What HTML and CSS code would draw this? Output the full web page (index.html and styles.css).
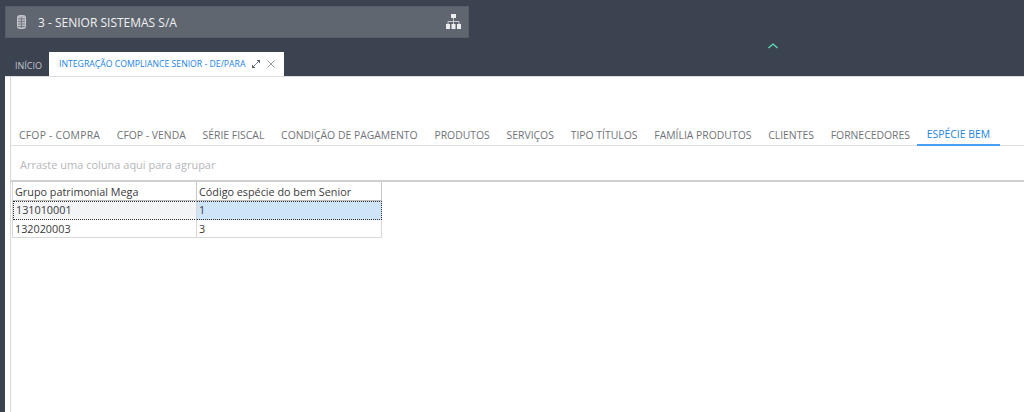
FILE: index.html
```html
<!DOCTYPE html>
<html lang="pt">
<head>
<meta charset="utf-8">
<title>Integração Compliance Senior</title>
<link rel="stylesheet" href="styles.css">
</head>
<body>
<header class="top">
  <div class="company">
    <svg class="ico-doc" width="9" height="14" viewBox="0 0 9 14"><rect x="0.500" y="0.500" width="8" height="13" rx="2" fill="#b4b7bb" stroke="#c4c7cb"/><path d="M1 4h7M1 6.500h7M1 9h7M1 11.500h7M4.500 2v11" stroke="#6d737c" stroke-width="0.800"/></svg>
    <span class="company-name">3 - SENIOR SISTEMAS S/A</span>
    <svg class="ico-tree" width="15" height="15" viewBox="0 0 15 15"><path d="M5 0h5v4H5zM0 10h4v5H0zM5.500 10h4v5h-4zM11 10h4v5h-4z" fill="#eceded"/><path d="M7.500 4v3M2 10V7.500h11V10M7.500 7v3" stroke="#c8cacd" fill="none"/></svg>
  </div>
  <div class="collapse-row">
    <svg width="10" height="6" viewBox="0 0 10 6"><path d="M0.500 5L5 1l4.500 4" fill="none" stroke="#5fe0bb" stroke-width="1.300"/></svg>
  </div>
  <nav class="doc-tabs">
    <span class="doc-tab">INÍCIO</span>
    <span class="doc-tab doc-tab-active">
      <span>INTEGRAÇÃO COMPLIANCE SENIOR - DE/PARA</span>
      <svg class="ico-expand" width="8" height="8" viewBox="0 0 8 8"><path d="M0 8V5l3 3zM8 0v3L5 0zM1.500 6.500l5-5" fill="#56606a" stroke="#56606a" stroke-width="0.800"/></svg>
      <svg class="ico-close" width="8" height="8" viewBox="0 0 8 8"><path d="M0.500 0.500l7 7M7.500 0.500l-7 7" stroke="#9a9a9a" stroke-width="1"/></svg>
    </span>
  </nav>
</header>
<main class="panel">
  <div class="inner">
    <nav class="sub-tabs">
      <span class="sub-tab sub-tab-first">CFOP - COMPRA</span>
      <span class="sub-tab">CFOP - VENDA</span>
      <span class="sub-tab">SÉRIE FISCAL</span>
      <span class="sub-tab">CONDIÇÃO DE PAGAMENTO</span>
      <span class="sub-tab">PRODUTOS</span>
      <span class="sub-tab">SERVIÇOS</span>
      <span class="sub-tab">TIPO TÍTULOS</span>
      <span class="sub-tab">FAMÍLIA PRODUTOS</span>
      <span class="sub-tab">CLIENTES</span>
      <span class="sub-tab">FORNECEDORES</span>
      <span class="sub-tab sub-tab-active">ESPÉCIE BEM</span>
    </nav>
    <div class="group-hint">Arraste uma coluna aqui para agrupar</div>
    <div class="grid">
      <div class="cell head">Grupo patrimonial Mega</div>
      <div class="cell head">Código espécie do bem Senior</div>
      <div class="cell sel-key">131010001</div>
      <div class="cell sel-val">1</div>
      <div class="cell">132020003</div>
      <div class="cell">3</div>
    </div>
  </div>
</main>
</body>
</html>
```
FILE: styles.css
```css
* { box-sizing: border-box; }
html, body { margin: 0; height: 412px; overflow: hidden; }
body { background: #3b4250; font-family: "Open Sans", "Liberation Sans", sans-serif; display: flex; flex-direction: column; }
.top { height: 76px; padding: 6px 0 0 5px; flex: none; display: flex; flex-direction: column; }
.company { width: 464px; height: 32px; background: #5f6670; border: 1px solid #565d69; display: flex; align-items: center; padding: 0 7px 0 11px; color: #f0f1f2; }
.ico-doc { flex: none; }
.ico-tree { margin-top: -2px; }
.company-name { flex: 1; margin-left: 12px; font-size: 12px; }
.collapse-row { height: 14px; display: flex; justify-content: flex-end; padding: 5px 246px 0 0; }
.collapse-row svg { display: block; }
.doc-tabs { display: flex; height: 24px; }
.doc-tab { display: flex; align-items: center; padding: 3px 5px 0 10px; font-size: 9px; color: #c2c6cc; width: 44px; }
.doc-tab-active { width: 235px; background: #fff; color: #2084e0; padding: 0 9px 0 10px; }
.doc-tab-active span { flex: 1; white-space: nowrap; font-size: 8.700px; }
.ico-expand { margin-right: 7px; }
.panel { flex: 1; margin-left: 5px; background: #fff; border-top: 1px solid #dcdddf; padding-left: 5px; }
.inner { height: 100%; border-left: 1px solid #d8d8d8; }
.sub-tabs { display: flex; height: 69px; padding: 47px 0 0 0; border-bottom: 1px solid #dedede; }
.sub-tab { padding: 3px 8px 0; margin-right: 0.800px; font-size: 10.400px; color: #6f7378; white-space: nowrap; height: 21px; line-height: 17px; }
.sub-tab-first { letter-spacing: 0.220px; }
.sub-tab-active { color: #2084e0; border-bottom: 2px solid #4a9ff5; padding: 2px 10px 0; margin-left: -2px; width: 83px; height: 22px; }
.group-hint { height: 36px; padding: 11px 0 0 9px; font-size: 11px; color: #b5b7ba; border-bottom: 2px solid #cfcfcf; }
.grid { display: grid; grid-template-columns: 184px 185px; width: 370px; margin-left: 1px; border-left: 1px solid #d6d6d6; font-size: 10.800px; color: #3a3a3a; }
.cell { height: 18.500px; padding: 0 2px; line-height: 18px; border-right: 1px solid #d9d9d9; border-bottom: 1px solid #d9d9d9; }
.head { height: 19px; line-height: 19px; border-bottom: 1px solid #bdbdbd; border-right-color: #c8c8c8; }
.sel-key { background: #f3f4f6; border-top: 1px dotted #333; border-bottom: 1px dotted #333; border-left: 1px dotted #333; line-height: 16px; }
.sel-val { background: #cfe5f7; border-top: 1px dotted #333; border-bottom: 1px dotted #333; border-right: 1px dotted #333; line-height: 16px; }
```
